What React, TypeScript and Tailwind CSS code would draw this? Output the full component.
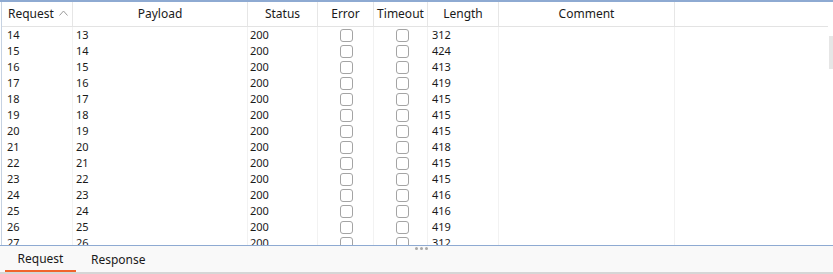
import React from "react";

const rows: [number, number, number, number][] = [
  [14, 13, 200, 312],
  [15, 14, 200, 424],
  [16, 15, 200, 413],
  [17, 16, 200, 419],
  [18, 17, 200, 415],
  [19, 18, 200, 415],
  [20, 19, 200, 415],
  [21, 20, 200, 418],
  [22, 21, 200, 415],
  [23, 22, 200, 415],
  [24, 23, 200, 416],
  [25, 24, 200, 416],
  [26, 25, 200, 419],
  [27, 26, 200, 312],
];

function Box() {
  return <div className="w-[13px] h-[13px] rounded-[3px] border border-[#a4a4a4] bg-white" />;
}

export default function App() {
  return (
    <div
      className="w-[833px] h-[274px] bg-white flex flex-col overflow-hidden text-[#1a1a1a]"
      style={{ fontFamily: '"Noto Sans", "Open Sans", sans-serif' }}
    >
      <div className="h-[246px] flex border-t-2 border-[#8eaad2] border-b border-b-[#8eaad2] relative">
        <div className="w-[2px] border-r border-[#c6d2e2]" />
        <div className="flex-1 flex flex-col overflow-hidden">
          {/* header */}
          <div className="h-[25px] flex border-b border-[#e3e3e3] w-[826px] text-[12px] shrink-0">
            <div className="w-[71px] border-r border-[#e6e6e6] flex items-center pl-[6px] gap-[5px]">
              <span>Request</span>
              <svg width="9" height="6" viewBox="0 0 9 6" className="mt-[-2px]">
                <path d="M0.5 5.5 L4.5 1 L8.5 5.5" fill="none" stroke="#9a9a9a" strokeWidth="1" />
              </svg>
            </div>
            <div className="w-[175px] border-r border-[#e6e6e6] flex items-center justify-center">Payload</div>
            <div className="w-[70px] border-r border-[#e6e6e6] flex items-center justify-center">Status</div>
            <div className="w-[56px] border-r border-[#e6e6e6] flex items-center justify-center">Error</div>
            <div className="w-[54px] border-r border-[#e6e6e6] flex items-center justify-center">Timeout</div>
            <div className="w-[71px] border-r border-[#e6e6e6] flex items-center justify-center">Length</div>
            <div className="w-[176px] border-r border-[#e6e6e6] flex items-center justify-center">Comment</div>
            <div className="flex-1" />
          </div>
          {/* rows */}
          <div className="flex flex-col text-[11px]">
            {rows.map((r) => (
              <div key={r[0]} className="h-[16px] flex items-center shrink-0">
                <div className="w-[71px] h-full border-r border-[#f2f2f2] pl-[5px] flex items-center">{r[0]}</div>
                <div className="w-[175px] h-full border-r border-[#f2f2f2] pl-[3px] flex items-center">{r[1]}</div>
                <div className="w-[70px] h-full border-r border-[#f2f2f2] pl-[2px] flex items-center">{r[2]}</div>
                <div className="w-[56px] h-full border-r border-[#f2f2f2] flex items-center pl-[22px]">
                  <Box />
                </div>
                <div className="w-[54px] h-full border-r border-[#f2f2f2] flex items-center pl-[22px]">
                  <Box />
                </div>
                <div className="w-[71px] h-full border-r border-[#f2f2f2] pl-[4px] flex items-center">{r[3]}</div>
                <div className="w-[176px] h-full border-r border-[#f2f2f2]" />
                <div className="flex-1" />
              </div>
            ))}
          </div>
        </div>
        <div className="absolute right-0 top-[34px] w-[4px] h-[33px] bg-[#e6e6e6]" />
      </div>
      {/* bottom tabs */}
      <div className="flex-1 bg-[#f9f9f9] border-b-2 border-[#d6d6d6] relative flex items-end">
        <div className="absolute left-[415px] top-[1px] flex gap-[2px]">
          <div className="w-[3px] h-[3px] rounded-full bg-[#a8a8a8]" />
          <div className="w-[3px] h-[3px] rounded-full bg-[#a8a8a8]" />
          <div className="w-[3px] h-[3px] rounded-full bg-[#a8a8a8]" />
        </div>
        <div className="flex text-[12px] ml-[5px]">
          <div className="w-[71px] h-[24px] flex items-center justify-center border-b-2 border-[#f0642c] mb-[-2px]">
            Request
          </div>
          <div className="ml-[15px] h-[24px] flex items-center">Response</div>
        </div>
      </div>
    </div>
  );
}
